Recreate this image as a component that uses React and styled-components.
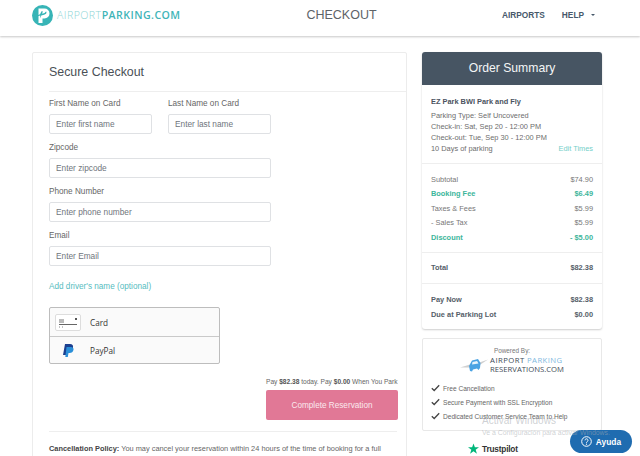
import styled, { createGlobalStyle } from "styled-components";

const GlobalStyle = createGlobalStyle`
  html, body {
    margin: 0;
    padding: 0;
    height: 456px;
    overflow: hidden;
    background: #fff;
    font-family: "Liberation Sans", Arial, sans-serif;
    color: #555;
  }
  * { box-sizing: border-box; }
  input::placeholder { color: #6f757c; opacity: 1; }
`;

const Page = styled.div`
  position: relative;
  width: 640px;
  height: 456px;
  overflow: hidden;
`;

const Header = styled.header`
  height: 36px;
  display: grid;
  grid-template-columns: 1fr 1fr 1fr;
  align-items: center;
  padding: 0 45px 7px 32px;
  box-shadow: 0 1px 2px rgba(0, 0, 0, 0.22);
  position: relative;
`;

const Logo = styled.div`
  display: flex;
  align-items: center;
  gap: 4px;
  margin-top: 1px;
`;

const LogoText = styled.div`
  font-family: "Open Sans", sans-serif;
  font-size: 10.6px;
  letter-spacing: 0.45px;
  color: #8fd5d6;
  white-space: nowrap;
  font-weight: 300;
  b { color: #3fb5b8; font-weight: 600; }
`;

const PageTitle = styled.div`
  font-size: 12.5px;
  color: #5d6368;
  text-align: center;
  padding-left: 56px;
`;

const Nav = styled.nav`
  display: flex;
  justify-content: flex-end;
  gap: 17px;
  font-size: 8.3px;
  font-weight: bold;
  color: #47596b;
`;

const Caret = styled.span`
  display: inline-block;
  margin-left: 7px;
  vertical-align: 2px;
  border-left: 2.5px solid transparent;
  border-right: 2.5px solid transparent;
  border-top: 2.5px solid #47596b;
`;

const Main = styled.main`
  display: flex;
  align-items: flex-start;
  gap: 15px;
  padding: 16px 0 0 32px;
`;

const FormCard = styled.section`
  width: 375px;
  height: 440px;
  border: 1px solid #ececec;
  border-radius: 2px;
  padding-left: 16px;
`;

const CardTitle = styled.h2`
  margin: 0 0 3px;
  height: 39px;
  line-height: 38px;
  font-size: 12.4px;
  font-weight: normal;
  color: #4a5056;
  border-bottom: 1px solid #eee;
`;

const FieldRow = styled.div`
  display: flex;
  gap: 16px;
`;

const Field = styled.div`
  width: ${(p) => p.$width}px;
  height: 44px;
`;

const Label = styled.label`
  display: block;
  height: 19px;
  line-height: 18px;
  font-size: 8.2px;
  color: #666;
  white-space: nowrap;
`;

const Input = styled.input`
  display: block;
  width: 100%;
  height: 20px;
  border: 1px solid #dfe1e4;
  border-radius: 2px;
  padding: 0 6px;
  font: 8.3px "Liberation Sans", Arial, sans-serif;
  outline: none;
`;

const DriverLink = styled.a`
  display: block;
  margin-top: 5px;
  height: 31px;
  line-height: 21px;
  font-size: 8.2px;
  color: #56bcc0;
`;

const PayBox = styled.div`
  width: 171px;
  height: 57px;
  border: 1px solid #bdbdbd;
  border-radius: 2px;
  background: #fafafa;
`;

const PayRow = styled.div`
  height: 28px;
  display: flex;
  align-items: center;
  font-family: "Open Sans", sans-serif;
  font-size: 8.2px;
  color: #333;
  & + & { border-top: 1px solid #c9c9c9; }
`;

const PayIcon = styled.div`
  width: 36px;
  margin-right: 4px;
  display: flex;
  justify-content: center;
`;

const PayColumn = styled.div`
  width: 132px;
  margin: 11.5px 0 0 217px;
`;

const PayNote = styled.div`
  font-size: 6.6px;
  color: #666;
  white-space: nowrap;
  line-height: 11px;
  margin-bottom: 3.5px;
  padding-right: 1px;
  text-align: right;
  b { color: #555; }
`;

const SubmitButton = styled.button`
  display: block;
  width: 132px;
  height: 30px;
  border: none;
  border-radius: 2px;
  background: #e17896;
  color: #fbe9ee;
  font: 8.2px "Liberation Sans", Arial, sans-serif;
`;

const Policy = styled.p`
  margin: 11px 9px 0 0;
  padding-top: 11px;
  border-top: 1px solid #eee;
  font-size: 7.4px;
  line-height: 12px;
  color: #666;
  white-space: nowrap;
  b { color: #444; }
`;

const Side = styled.aside`
  width: 180px;
`;

const SummaryCard = styled.section`
  border-radius: 3px;
  box-shadow: 0 1px 2px rgba(0, 0, 0, 0.2);
  overflow: hidden;
  background: #fff;
`;

const SummaryHead = styled.h2`
  margin: 0;
  height: 33px;
  line-height: 33px;
  background: #475563;
  color: #f4f5f6;
  font-size: 12.2px;
  font-weight: normal;
  text-align: center;
`;

const Section = styled.div`
  padding: ${(p) => p.$pad};
  & + & { border-top: 1px solid #eee; }
`;

const ParkName = styled.div`
  font-size: 7.4px;
  font-weight: bold;
  color: #4b5360;
  line-height: 11px;
  margin-bottom: 3px;
`;

const InfoLine = styled.div`
  display: flex;
  justify-content: space-between;
  font-size: 7.4px;
  line-height: 11px;
  color: #6d6d6d;
  white-space: nowrap;
  a { color: #75cfc9; }
`;

const PriceRow = styled.div`
  display: flex;
  justify-content: space-between;
  height: 14.4px;
  line-height: 14px;
  font-size: 7.4px;
  white-space: nowrap;
  font-weight: ${(p) => (p.$bold || p.$accent ? "bold" : "normal")};
  color: ${(p) => (p.$accent ? "#3cb69b" : p.$bold ? "#555e69" : "#777")};
`;

const PoweredCard = styled.section`
  margin-top: 9px;
  height: 93px;
  border: 1px solid #e8e8e8;
  border-radius: 2px;
  padding-top: 8px;
`;

const PoweredBy = styled.div`
  text-align: center;
  font-size: 6.4px;
  line-height: 8px;
  color: #777;
`;

const BrandRow = styled.div`
  display: flex;
  align-items: center;
  justify-content: center;
  gap: 2px;
  margin: 1px 0 8px;
`;

const BrandText = styled.div`
  font-family: "Open Sans", sans-serif;
  font-size: 7.7px;
  line-height: 8.5px;
  color: #3e4a56;
  white-space: nowrap;
  span { color: #7fb9e0; }
`;

const BrandTop = styled.div`
  letter-spacing: 0.45px;
`;

const CheckItem = styled.div`
  display: flex;
  align-items: center;
  gap: 3px;
  padding-left: 8px;
  height: 14px;
  font-size: 6.6px;
  color: #666;
  white-space: nowrap;
`;

const Trustpilot = styled.div`
  margin: 12px 0 0 46px;
  display: flex;
  align-items: center;
  gap: 3px;
  font-size: 8.3px;
  font-weight: bold;
  color: #333;
  letter-spacing: -0.2px;
`;

const Watermark = styled.div`
  position: absolute;
  left: 482px;
  top: 414px;
  color: rgba(165, 170, 175, 0.55);
  font-size: 6.9px;
  white-space: nowrap;
  line-height: 11px;
  div:first-child { font-size: 10px; line-height: 13px; }
`;

const HelpButton = styled.button`
  position: absolute;
  left: 570px;
  top: 430px;
  width: 62px;
  height: 23px;
  border: none;
  border-radius: 12px;
  background: #1f6cb0;
  color: #fff;
  display: flex;
  align-items: center;
  justify-content: center;
  gap: 4px;
  padding: 0;
  font: bold 8.4px "Liberation Sans", Arial, sans-serif;
`;

const fields = [
  ["Zipcode", "Enter zipcode"],
  ["Phone Number", "Enter phone number"],
  ["Email", "Enter Email"],
];

const perks = ["Free Cancellation", "Secure Payment with SSL Encryption", "Dedicated Customer Service Team to Help"];

const LogoMark = () => (
  <svg width="21" height="21" viewBox="0 0 21 21">
    <circle cx="10.5" cy="10.5" r="10.5" fill="#37b4b6" />
    <path d="M6.500 18V3.500h6a5 5 0 0 1 0 10H10.500V18z" fill="#fff" />
    <path d="M5 10.500l3-1.200 1.500-3h1.300l-.6 2.500 2.400-.8 1-1.200h1l-.5 2-2 1-2.800.8-1 2.200H8l.3-2.300-2.500.7z" fill="#37b4b6" />
  </svg>
);

const CardIcon = () => (
  <svg width="26" height="17" viewBox="0 0 26 17">
    <rect x=".5" y=".5" width="25" height="16" rx="1.5" fill="#fff" stroke="#ddd" />
    <path d="M4 6h5M4 8h5" stroke="#777" />
    <path d="M4 10.500h18" stroke="#666" />
    <rect x="20" y="4" width="2" height="2" fill="#555" />
    <path d="M4 13h1M7 13h1" stroke="#888" />
  </svg>
);

const PaypalIcon = () => (
  <svg width="11" height="13" viewBox="0 0 11 13">
    <path d="M2 0h5c2.400 0 3.400 1.400 3 3.400C9.500 6 8 7 5.800 7H4.300L3.500 11H0z" fill="#1b3f8f" />
    <path d="M3.500 3h4.800c1.800.4 2.400 1.400 2.200 2.800C10 8 8.600 9 6.700 9H5.500L4.800 13H2.300z" fill="#2a8fd8" />
  </svg>
);

const BrandCar = () => (
  <svg width="28" height="14" viewBox="0 0 28 14">
    <path d="M0 9.500L10 6.500 10.500 9.500z" fill="#d0d0d0" />
    <path d="M18 5L28 1.500 19 7.500z" fill="#d0d0d0" />
    <path d="M9 8l3-5.500 6-1.500 2.500 4-.5 5-1.500 2-1.500-1.500-4 1-1 2-2-.5z" fill="#4ba3e3" />
    <path d="M12.500 4l4.500-1 1.500 2.500-6.500 1z" fill="#e8f4fc" />
  </svg>
);

const Check = () => (
  <svg width="9" height="8" viewBox="0 0 9 8">
    <path d="M.8 4.200L3.200 6.500 8.200 1.200" fill="none" stroke="#444" strokeWidth="1.300" />
  </svg>
);

const Star = () => (
  <svg width="11" height="11" viewBox="0 0 24 24">
    <path d="M12 1l3 8.500h9l-7.300 5.300 2.800 8.700L12 18.200 4.500 23.500l2.800-8.700L0 9.500h9z" fill="#00b67a" />
  </svg>
);

const HelpIcon = () => (
  <svg width="11" height="11" viewBox="0 0 11 11">
    <circle cx="5.500" cy="5.500" r="4.800" fill="none" stroke="#fff" />
    <path d="M4 4.300a1.500 1.500 0 1 1 2.300 1.300c-.6.400-.8.600-.8 1.200" fill="none" stroke="#fff" />
    <circle cx="5.500" cy="8.200" r=".6" fill="#fff" />
  </svg>
);

export default function App() {
  return (
    <Page>
      <GlobalStyle />
      <Header>
        <Logo>
          <LogoMark />
          <LogoText>AIRPORT<b>PARKING.COM</b></LogoText>
        </Logo>
        <PageTitle>CHECKOUT</PageTitle>
        <Nav>
          <span>AIRPORTS</span>
          <span>HELP<Caret /></span>
        </Nav>
      </Header>
      <Main>
        <FormCard>
          <CardTitle>Secure Checkout</CardTitle>
          <FieldRow>
            <Field $width={103}>
              <Label>First Name on Card</Label>
              <Input placeholder="Enter first name" />
            </Field>
            <Field $width={103}>
              <Label>Last Name on Card</Label>
              <Input placeholder="Enter last name" />
            </Field>
          </FieldRow>
          {fields.map(([label, hint]) => (
            <Field $width={222} key={label}>
              <Label>{label}</Label>
              <Input placeholder={hint} />
            </Field>
          ))}
          <DriverLink>Add driver's name (optional)</DriverLink>
          <PayBox>
            <PayRow>
              <PayIcon><CardIcon /></PayIcon>
              Card
            </PayRow>
            <PayRow>
              <PayIcon><PaypalIcon /></PayIcon>
              PayPal
            </PayRow>
          </PayBox>
          <PayColumn>
            <PayNote>Pay <b>$82.38</b> today. Pay <b>$0.00</b> When You Park</PayNote>
            <SubmitButton>Complete Reservation</SubmitButton>
          </PayColumn>
          <Policy><b>Cancellation Policy:</b> You may cancel your reservation within 24 hours of the time of booking for a full</Policy>
        </FormCard>
        <Side>
          <SummaryCard>
            <SummaryHead>Order Summary</SummaryHead>
            <Section $pad="10.5px 9px 9.5px">
              <ParkName>EZ Park BWI Park and Fly</ParkName>
              <InfoLine>Parking Type: Self Uncovered</InfoLine>
              <InfoLine>Check-in: Sat, Sep 20 - 12:00 PM</InfoLine>
              <InfoLine>Check-out: Tue, Sep 30 - 12:00 PM</InfoLine>
              <InfoLine>10 Days of parking<a>Edit Times</a></InfoLine>
            </Section>
            <Section $pad="9px 9px 7px">
              <PriceRow><span>Subtotal</span><span>$74.90</span></PriceRow>
              <PriceRow $accent><span>Booking Fee</span><span>$6.49</span></PriceRow>
              <PriceRow><span>Taxes &amp; Fees</span><span>$5.99</span></PriceRow>
              <PriceRow><span>- Sales Tax</span><span>$5.99</span></PriceRow>
              <PriceRow $accent><span>Discount</span><span>- $5.00</span></PriceRow>
            </Section>
            <Section $pad="8.5px 9px 7.5px">
              <PriceRow $bold><span>Total</span><span>$82.38</span></PriceRow>
            </Section>
            <Section $pad="9px 9px 7px">
              <PriceRow $bold><span>Pay Now</span><span>$82.38</span></PriceRow>
              <PriceRow $bold><span>Due at Parking Lot</span><span>$0.00</span></PriceRow>
            </Section>
          </SummaryCard>
          <PoweredCard>
            <PoweredBy>Powered By:</PoweredBy>
            <BrandRow>
              <BrandCar />
              <BrandText>
                <BrandTop>AIRPORT <span>PARKING</span></BrandTop>
                RESERVATIONS.COM
              </BrandText>
            </BrandRow>
            {perks.map((perk) => (
              <CheckItem key={perk}><Check />{perk}</CheckItem>
            ))}
          </PoweredCard>
          <Trustpilot><Star />Trustpilot</Trustpilot>
        </Side>
      </Main>
      <HelpButton><HelpIcon />Ayuda</HelpButton>
      <Watermark>
        <div>Activar Windows</div>
        <div>Ve a Configuración para activar Windows.</div>
      </Watermark>
    </Page>
  );
}
